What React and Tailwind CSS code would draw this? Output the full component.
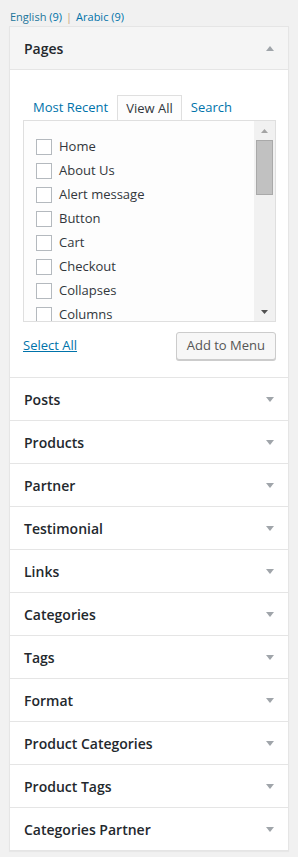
import React from 'react';

const pages = ['Home', 'About Us', 'Alert message', 'Button', 'Cart', 'Checkout', 'Collapses', 'Columns'];

const sections = [
  'Posts',
  'Products',
  'Partner',
  'Testimonial',
  'Links',
  'Categories',
  'Tags',
  'Format',
  'Product Categories',
  'Product Tags',
  'Categories Partner',
];

function Arrow({ up }) {
  return (
    <svg width="8" height="5" viewBox="0 0 8 5" className="shrink-0">
      {up ? <path d="M4 0 L8 5 L0 5 Z" fill="#a0a5aa" /> : <path d="M0 0 L8 0 L4 5 Z" fill="#a0a5aa" />}
    </svg>
  );
}

export default function App() {
  return (
    <div className="w-[298px] h-[857px] bg-[#f1f1f1] overflow-hidden font-['Open_Sans',sans-serif] text-[#23282d]">
      {/* language switch */}
      <div className="h-[26px] pl-[10px] pt-[9px] text-[11px] leading-[15px]">
        <span className="text-[#21759b]">English <span className="text-[#0073aa]">(9)</span></span>
        <span className="text-[#c8a07a] mx-[4px]">|</span>
        <span className="text-[#0073aa]">Arabic (9)</span>
      </div>

      <div className="ml-[9px] w-[280px] border border-[#e5e5e5] bg-white shadow-[0_1px_1px_rgba(0,0,0,0.04)]">
        {/* Pages section */}
        <div className="h-[43px] bg-[#f5f5f5] border-b border-[#e5e5e5] flex items-center justify-between px-[14px]">
          <span className="text-[14px] font-semibold">Pages</span>
          <Arrow up />
        </div>
        <div className="pl-[13px] pr-[12px] pt-[25px] pb-[17px]">
          <div className="flex text-[13px] leading-[18px]">
            <div className="pl-[10px] pr-[9px] pt-[3px] h-[24px] text-[#0073aa]">Most Recent</div>
            <div className="px-[8px] pt-[3px] h-[25px] border border-b-0 border-[#dfdfdf] bg-[#fdfdfd] text-[#32373c] relative z-10">View All</div>
            <div className="px-[9px] pt-[3px] h-[24px] text-[#0073aa]">Search</div>
          </div>
          <div className="h-[202px] border border-[#dfdfdf] bg-[#fdfdfd] flex">
            <div className="flex-1 overflow-hidden pl-[12px] pt-[14px]">
              {pages.map((p) => (
                <label key={p} className="h-[24px] flex items-center gap-[7px] text-[13px] text-[#32373c]">
                  <span className="w-[16px] h-[16px] border border-[#b4b9be] bg-white shrink-0" />
                  {p}
                </label>
              ))}
            </div>
            <div className="w-[21px] bg-[#f1f1f1] flex flex-col items-center">
              <div className="h-[19px] flex items-center justify-center">
                <svg width="7" height="4" viewBox="0 0 7 4"><path d="M3.5 0 L7 4 L0 4 Z" fill="#a3a3a3" /></svg>
              </div>
              <div className="w-[17px] h-[55px] bg-[#c1c1c1] border border-[#a9a9a9]" />
              <div className="flex-1" />
              <div className="h-[19px] flex items-center justify-center">
                <svg width="7" height="4" viewBox="0 0 7 4"><path d="M0 0 L7 0 L3.5 4 Z" fill="#505050" /></svg>
              </div>
            </div>
          </div>
          <div className="flex items-center justify-between mt-[10px]">
            <span className="text-[13px] text-[#0073aa] underline">Select All</span>
            <button className="h-[28px] px-[10px] text-[13px] text-[#555] bg-[#f7f7f7] border border-[#cccccc] rounded-[3px] shadow-[0_1px_0_#cccccc]">
              Add to Menu
            </button>
          </div>
        </div>

        {sections.map((s) => (
          <div key={s} className="h-[43px] border-t border-[#e5e5e5] flex items-center justify-between px-[14px]">
            <span className="text-[14px] font-semibold">{s}</span>
            <Arrow />
          </div>
        ))}
      </div>
    </div>
  );
}
